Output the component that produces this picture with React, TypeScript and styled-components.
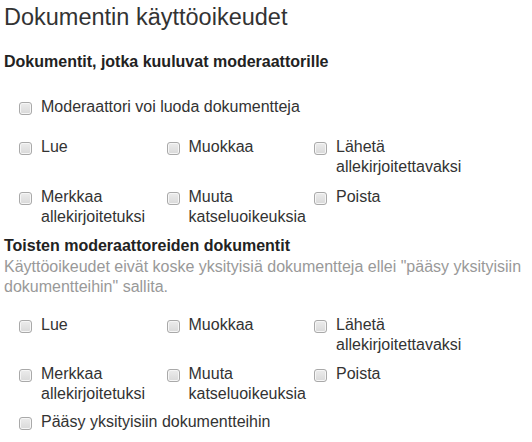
import * as React from 'react';
import styled, { createGlobalStyle } from 'styled-components';

const GlobalStyle = createGlobalStyle`
	html, body {
		margin: 0;
		padding: 0;
		background: #fff;
	}
	body {
		font-family: 'Liberation Sans', Arial, Helvetica, sans-serif;
		font-size: 16px;
		line-height: 20px;
		color: #333;
	}
`;

const Page = styled.div`
	padding: 4px 4px 0 4px;
`;

const Title = styled.h3`
	margin: 0;
	font-size: 23.5px;
	line-height: 26px;
	font-weight: normal;
	color: #333;
`;

const SectionHeading = styled.h4<{ $top: number }>`
	margin: ${(p) => p.$top}px 0 0 0;
	font-size: 16px;
	line-height: 20px;
	font-weight: bold;
	color: #222;
`;

const HelpText = styled.p`
	margin: 1px 0 0 0;
	color: #999;
	max-width: 524px;
`;

const Row = styled.div<{ $top: number }>`
	display: grid;
	grid-template-columns: repeat(3, 147.5px);
	margin-top: ${(p) => p.$top}px;
`;

const Cell = styled.label<{ $wide?: boolean }>`
	display: flex;
	align-items: flex-start;
	padding-left: 15px;
	cursor: pointer;
	white-space: nowrap;
	grid-column: ${(p) => (p.$wide ? '1 / -1' : 'auto')};
`;

const Box = styled.span`
	flex: none;
	box-sizing: border-box;
	width: 13px;
	height: 13px;
	margin-top: 5px;
	margin-right: 9px;
	border: 1px solid #a9a9a9;
	border-radius: 3px;
	background: linear-gradient(#ececec, #d9d9d9);
	box-shadow: inset 0 0 0 1px #f6f6f6;
`;

const LabelText = styled.span`
	color: #333;
`;

type Item = string[];

const CheckCell = ({ lines, wide }: { lines: Item; wide?: boolean }) => (
	<Cell $wide={wide}>
		<Box />
		<LabelText>
			{lines.map((l, i) => (
				<React.Fragment key={l}>
					{i > 0 && <br />}
					{l}
				</React.Fragment>
			))}
		</LabelText>
	</Cell>
);

const permRows: Item[][] = [
	[['Lue'], ['Muokkaa'], ['Lähetä', 'allekirjoitettavaksi']],
	[['Merkkaa', 'allekirjoitetuksi'], ['Muuta', 'katseluoikeuksia'], ['Poista']],
];

const App = () => (
	<Page>
		<GlobalStyle />
		<Title>Dokumentin käyttöoikeudet</Title>

		<SectionHeading $top={22}>Dokumentit, jotka kuuluvat moderaattorille</SectionHeading>
		<Row $top={25}>
			<CheckCell lines={['Moderaattori voi luoda dokumentteja']} wide />
		</Row>
		{permRows.map((row, i) => (
			<Row $top={i === 0 ? 20 : 10} key={`own${i}`}>
				{row.map((lines) => (
					<CheckCell lines={lines} key={lines.join()} />
				))}
			</Row>
		))}

		<SectionHeading $top={9}>Toisten moderaattoreiden dokumentit</SectionHeading>
		<HelpText>
			Käyttöoikeudet eivät koske yksityisiä dokumentteja ellei "pääsy yksityisiin
			dokumentteihin" sallita.
		</HelpText>
		{permRows.map((row, i) => (
			<Row $top={i === 0 ? 18 : 9} key={`other${i}`}>
				{row.map((lines) => (
					<CheckCell lines={lines} key={lines.join()} />
				))}
			</Row>
		))}
		<Row $top={8}>
			<CheckCell lines={['Pääsy yksityisiin dokumentteihin']} wide />
		</Row>
	</Page>
);

export default App;
